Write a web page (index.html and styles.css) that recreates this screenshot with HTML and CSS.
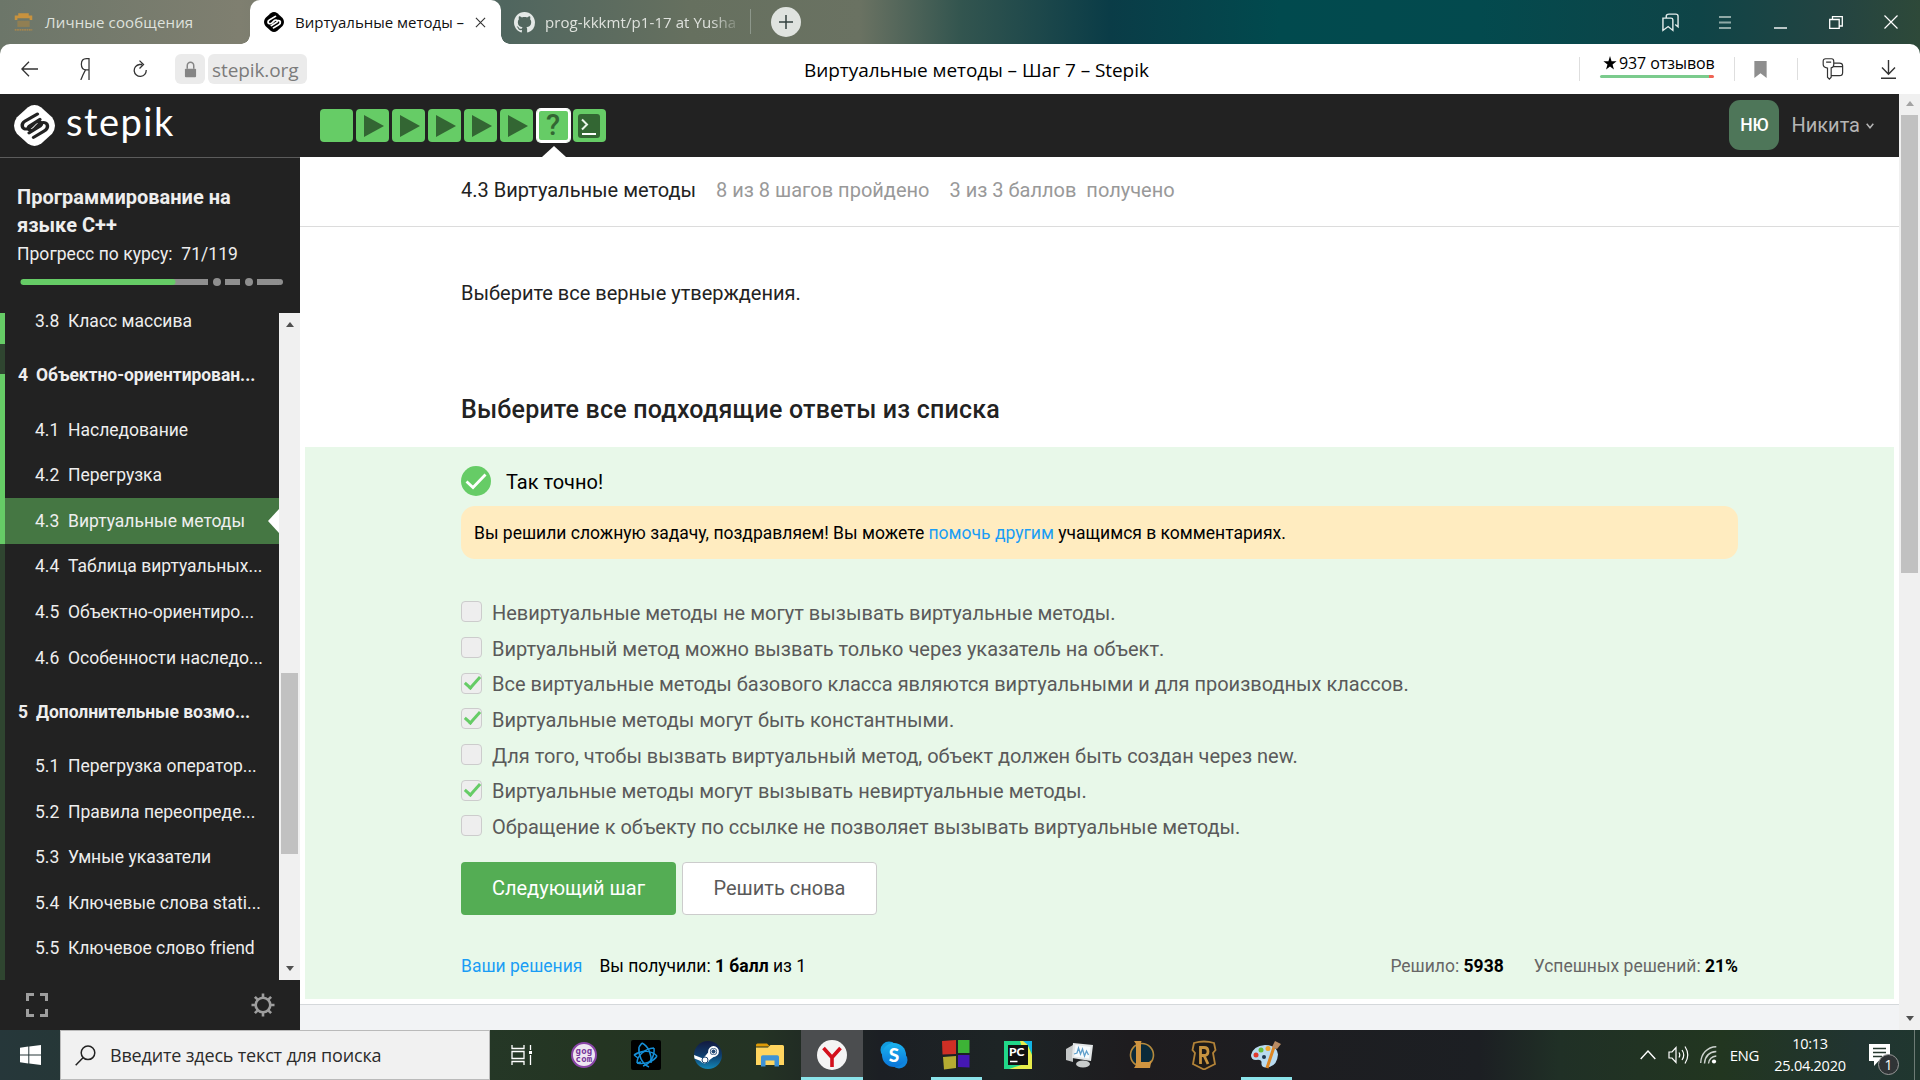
FILE: index.html
```html
<!DOCTYPE html>
<html lang="ru">
<head>
<meta charset="utf-8">
<title>Виртуальные методы – Шаг 7 – Stepik</title>
<link rel="stylesheet" href="styles.css">
</head>
<body>
<div class="screen">
  <header class="tabs">
    <div class="tab tab-first">
      <svg class="tab-icon" width="21" height="21" viewBox="0 0 22 24"><path d="M1 9V4h4V1.500h12V4h4v5h-3V7H4v2z" fill="#c8923e"/><path d="M4 10h14v7H4z" fill="#a98545" opacity=".6"/><path d="M1 20.500h20" stroke="#b98b45" stroke-width="1.500" stroke-dasharray="2 .7"/></svg>
      <span class="tab-title">Личные сообщения</span>
    </div>
    <div class="tab tab-active">
      <svg class="tab-icon" width="20" height="20" viewBox="0 0 42 50" preserveAspectRatio="none"><path d="M14 3q7-6 14 0l11 12q6 10 0 20L28 47q-7 6-14 0L3 35q-6-10 0-20z" fill="#000"/><path d="M24 11 11.500 19.500c-5 3.500-3.500 11.500 2.500 9.500 4-1.500 5-6 9-8.500 4-2 6.500 2 4 5L15.500 34M20 39.500l10.500-7.500c6-4 4.500-12-2-10.500" fill="none" stroke="#fff" stroke-width="4" stroke-linecap="round"/></svg>
      <span class="tab-title">Виртуальные методы –</span>
      <svg class="tab-close" width="11" height="11" viewBox="0 0 12 12"><path d="m1 1 10 10M11 1 1 11" stroke="#333" stroke-width="1.200"/></svg>
    </div>
    <div class="tab tab-last">
      <svg class="tab-icon" width="21" height="21" viewBox="0 0 16 16"><path fill="#e4e9e7" d="M8 0C3.580 0 0 3.580 0 8c0 3.540 2.290 6.530 5.470 7.590.4.070.55-.17.55-.38 0-.19-.01-.82-.01-1.490-2.010.37-2.530-.49-2.690-.94-.09-.23-.48-.94-.82-1.130-.28-.15-.68-.52-.01-.53.63-.01 1.080.58 1.230.82.72 1.210 1.870.87 2.330.66.07-.52.28-.87.51-1.070-1.780-.2-3.640-.89-3.640-3.950 0-.87.31-1.590.82-2.150-.08-.2-.36-1.020.08-2.120 0 0 .67-.21 2.200.82.640-.18 1.320-.27 2-.27s1.360.09 2 .27c1.530-1.040 2.200-.82 2.200-.82.44 1.100.16 1.920.08 2.120.51.56.82 1.270.82 2.150 0 3.070-1.870 3.750-3.650 3.950.29.25.54.73.54 1.480 0 1.070-.01 1.930-.01 2.200 0 .21.15.46.55.38A8.010 8.010 0 0 0 16 8c0-4.420-3.580-8-8-8z"/></svg>
      <span class="tab-title">prog-kkkmt/p1-17 at Yusha</span>
    </div>
    <div class="new-tab"><svg width="14" height="14" viewBox="0 0 15 15"><path d="M7.500 0v15M0 7.500h15" stroke="#33413f" stroke-width="1.600"/></svg></div>
    <div class="window-buttons">
      <span><svg width="17" height="19" viewBox="0 0 18 24" preserveAspectRatio="none"><path d="M1 6.500h8.500q2 0 2 2V22l-5-5-5.500 5zM4.500 6.500V4q0-2.500 3-2.500h7q2.500 0 2.500 2.500v13.500l-3-3" fill="none" stroke="#e3eceb" stroke-width="1.500"/></svg></span>
      <span><svg width="12" height="13" viewBox="0 0 12 13"><path d="M0 1h12M0 6.500h12M0 12h12" stroke="#8fa9a6" stroke-width="2"/></svg></span>
      <span><svg width="13" height="14" viewBox="0 0 13 14"><path d="M0 13h13" stroke="#fff" stroke-width="1.400"/></svg></span>
      <span><svg width="14" height="13" viewBox="0 0 14 13"><path d="M.7 3.500h9.500v9H.7zM3.500 3.500V.7h9.800V10h-3" fill="none" stroke="#fff" stroke-width="1.300"/></svg></span>
      <span><svg width="14" height="14" viewBox="0 0 14 14"><path d="m.5.500 13 13m0-13-13 13" stroke="#fff" stroke-width="1.200"/></svg></span>
    </div>
  </header>

  <nav class="toolbar">
    <svg class="tool-back" width="17" height="16" viewBox="0 0 17 16"><path d="M17 8H1M8 .7.900 8 8 15.300" fill="none" stroke="#333" stroke-width="1.300"/></svg>
    <svg class="tool-home" width="10" height="22" viewBox="0 0 10 23"><path d="M9.200 23V.700H6.500C3 .7 1.200 3 1.200 6.500S3 12.400 6.300 12.400H9M5.500 12.400 2.700 18Q1.500 21 .6 23" fill="none" stroke="#333" stroke-width="1.300"/></svg>
    <svg class="tool-reload" width="14" height="18" viewBox="0 0 14 18"><path d="M9 4.500H6.500A6 6 0 1 0 13.200 10M6.500.600l4 3.900-4 4" fill="none" stroke="#333" stroke-width="1.300"/></svg>
    <div class="lock-box"><svg width="13" height="17" viewBox="0 0 14 20" preserveAspectRatio="none"><path d="M3.500 9V5.500a3.500 4 0 0 1 7 0V9" fill="none" stroke="#858585" stroke-width="1.600"/><rect x="1" y="9" width="12" height="10" rx="1" fill="#858585"/></svg></div>
    <div class="url-box">stepik.org</div>
    <div class="page-title">Виртуальные методы – Шаг 7 – Stepik</div>
    <div class="reviews"><div class="reviews-label"><svg width="14" height="14" viewBox="0 0 15 16"><path d="M7.500 0 9.300 6H15l-4.600 3.700L12 15.500 7.500 12 3 15.500l1.600-5.800L0 6h5.700z"/></svg><span>937 отзывов</span></div><div class="reviews-bar"></div></div>
    <svg class="tool-mark" width="13" height="17" viewBox="0 0 13 18"><path d="M0 0h13v18l-6.500-5L0 18z" fill="#8e8e8e"/></svg>
    <svg class="tool-key" width="22" height="22" viewBox="0 0 23 24"><path d="M3.500.8H10q2.300 0 2.300 2.700v3.800q0 2.700-2.800 3.500V21l-2 2-2-2V11Q.8 10 .8 7V3.500Q.8.800 3.500.800zM4 4.500h5.500M12.500 5.500h6q3.500 0 3.500 3v7.500q0 3.200-3.500 3.200h-9M11.500 9.500H22" fill="none" stroke="#333" stroke-width="1.300"/></svg>
    <svg class="tool-down" width="15" height="19" viewBox="0 0 15 19"><path d="M7.500 0v14M1 7.500l6.500 6.700L14 7.500M0 18.200h15" fill="none" stroke="#333" stroke-width="1.400"/></svg>
  </nav>

  <div class="page">
    <div class="site">
      <header class="site-head">
        <div class="brand">
          <svg width="41" height="41" viewBox="0 0 42 50" preserveAspectRatio="none"><path d="M14 3q7-6 14 0l11 12q6 10 0 20L28 47q-7 6-14 0L3 35q-6-10 0-20z" fill="#fff"/><path d="M24 11 11.500 19.500c-5 3.500-3.500 11.500 2.500 9.500 4-1.500 5-6 9-8.500 4-2 6.500 2 4 5L15.500 34M20 39.500l10.500-7.500c6-4 4.500-12-2-10.500-4 1.500-5.500 6.500-9 9-3.500 2-6-1.500-4-4.500l11-8.500" fill="none" stroke="#222" stroke-width="3.600" stroke-linecap="round"/></svg>
          <span>stepik</span>
        </div>
        <div class="steps">
          <i class="step"></i>
          <i class="step play"></i>
          <i class="step play"></i>
          <i class="step play"></i>
          <i class="step play"></i>
          <i class="step play"></i>
          <i class="step current">?</i>
          <i class="step"><svg width="22" height="24" viewBox="0 0 22 24"><rect width="22" height="24" rx="3" fill="#336633"/><path d="m4 5.500 5 5-5 5" fill="none" stroke="#e8f5e8" stroke-width="2"/><path d="M4 20h14" stroke="#fff" stroke-width="2"/></svg></i>
        </div>
        <div class="user"><span class="avatar">НЮ</span><span class="user-name">Никита</span><svg width="8" height="6" viewBox="0 0 8 6"><path d="m.7.700 3.300 4 3.300-4" fill="none" stroke="#b5b5b5" stroke-width="1.500"/></svg></div>
      </header>
      <div class="columns">
        <aside class="sidebar">
          <div class="course">
            <div class="course-name">Программирование на языке C++</div>
            <div class="course-progress">Прогресс по курсу:&nbsp; 71/119</div>
            <svg width="264" height="10" viewBox="0 0 264 10"><path d="M4 5h184M205 5h15M237 5h22" stroke="#8f8f8f" stroke-width="6"/><circle cx="197" cy="5" r="4" fill="#8f8f8f"/><circle cx="229" cy="5" r="4" fill="#8f8f8f"/><circle cx="260" cy="5" r="3" fill="#8f8f8f"/><path d="M3.500 5h149" stroke="#66cc66" stroke-width="6" stroke-linecap="round"/></svg>
          </div>
          <div class="contents">
            <div class="stripe"><i class="strip-a"></i><i class="strip-b"></i><i class="strip-c"></i></div>
            <div class="lessons">
              <div class="lesson lesson-top"><b>3.8</b>Класс массива</div>
              <div class="section"><b>4</b>Объектно-ориентирован...</div>
              <div class="lesson"><b>4.1</b>Наследование</div>
              <div class="lesson"><b>4.2</b>Перегрузка</div>
              <div class="lesson lesson-current"><b>4.3</b>Виртуальные методы</div>
              <div class="lesson"><b>4.4</b>Таблица виртуальных...</div>
              <div class="lesson"><b>4.5</b>Объектно-ориентиро...</div>
              <div class="lesson"><b>4.6</b>Особенности наследо...</div>
              <div class="section"><b>5</b>Дополнительные возмо...</div>
              <div class="lesson"><b>5.1</b>Перегрузка оператор...</div>
              <div class="lesson"><b>5.2</b>Правила переопреде...</div>
              <div class="lesson"><b>5.3</b>Умные указатели</div>
              <div class="lesson"><b>5.4</b>Ключевые слова stati...</div>
              <div class="lesson"><b>5.5</b>Ключевое слово friend</div>
            </div>
            <div class="side-scroll"><i class="arrow-up"></i><i class="side-thumb"></i><i class="arrow-down"></i></div>
          </div>
          <div class="side-foot">
            <svg width="22" height="24" viewBox="0 0 22 24"><path d="M1.500 8V1.500H8M14 1.500h6.500V8M20.500 16v6.500H14M8 22.500H1.500V16" fill="none" stroke="#9e9e9e" stroke-width="3"/></svg>
            <svg width="24" height="24" viewBox="0 0 24 24"><circle cx="12" cy="12" r="7.300" fill="none" stroke="#9e9e9e" stroke-width="2.600"/><g stroke="#9e9e9e" stroke-width="2.600"><path d="M12 .5v4M12 19.500v4M.5 12h4M19.500 12h4M3.900 3.900l2.800 2.800M17.300 17.300l2.800 2.800M3.900 20.100l2.800-2.800M17.300 6.700l2.800-2.800"/></g></svg>
          </div>
        </aside>
        <main class="main">
          <div class="lesson-head"><span class="lesson-title">4.3 Виртуальные методы</span><span class="steps-done">8 из 8 шагов пройдено</span><span class="points">3 из 3 баллов &nbsp;получено</span></div>
          <p class="question">Выберите все верные утверждения.</p>
          <h2 class="task">Выберите все подходящие ответы из списка</h2>
          <section class="answer">
            <div class="verdict"><svg width="30" height="30" viewBox="0 0 30 30"><circle cx="15" cy="15" r="15" fill="#66cc66"/><path d="m5.500 15.500 6.500 6L24.500 8.500" fill="none" stroke="#fff" stroke-width="2.800"/></svg><span>Так точно!</span></div>
            <div class="praise"><span>Вы решили сложную задачу, поздравляем! Вы можете <a>помочь другим</a> учащимся в комментариях.</span></div>
            <ul class="choices">
              <li><i class="box"></i><span>Невиртуальные методы не могут вызывать виртуальные методы.</span></li>
              <li><i class="box"></i><span>Виртуальный метод можно вызвать только через указатель на объект.</span></li>
              <li><i class="box checked"></i><span>Все виртуальные методы базового класса являются виртуальными и для производных классов.</span></li>
              <li><i class="box checked"></i><span>Виртуальные методы могут быть константными.</span></li>
              <li><i class="box"></i><span>Для того, чтобы вызвать виртуальный метод, объект должен быть создан через new.</span></li>
              <li><i class="box checked"></i><span>Виртуальные методы могут вызывать невиртуальные методы.</span></li>
              <li><i class="box"></i><span>Обращение к объекту по ссылке не позволяет вызывать виртуальные методы.</span></li>
            </ul>
            <div class="buttons"><button class="btn next">Следующий шаг</button><button class="btn again">Решить снова</button></div>
            <div class="stats"><a>Ваши решения</a><span class="got">Вы получили: <b>1 балл</b> из 1</span><span class="solved">Решило: <b>5938</b></span><span class="rate">Успешных решений: <b>21%</b></span></div>
          </section>
          <div class="below"></div>
        </main>
      </div>
    </div>
    <div class="page-scroll"><i class="arrow-up dim"></i><i class="page-thumb"></i><i class="arrow-down"></i></div>
  </div>

  <footer class="taskbar">
    <div class="start"><svg width="21" height="20" viewBox="0 0 21 20"><path d="M0 2.800 8.300 1.600v7.900H0zM9.300 1.500 21 0v9.500H9.300zM0 10.500h8.300v7.900L0 17.200zM9.300 10.500H21V20L9.300 18.400z" fill="#fff"/></svg></div>
    <div class="search"><svg width="21" height="21" viewBox="0 0 21 21"><circle cx="13" cy="7.800" r="6.800" fill="none" stroke="#222" stroke-width="1.500"/><path d="M8 12.800.700 20.200" stroke="#222" stroke-width="1.500"/></svg><span>Введите здесь текст для поиска</span></div>
    <div class="apps">
      <div class="app"><svg width="22" height="20" viewBox="0 0 22 20"><path d="M1 0v3.500h12V0M1 20v-3.500h12V20M1 6.500h12v7H1zM19.500 0v5M19.500 10v10" fill="none" stroke="#fff" stroke-width="1.300"/><path d="M18 6h3v3h-3z" fill="#fff"/></svg></div>
      <div class="app"><div class="gog">gog<br>com</div></div>
      <div class="app"><svg width="30" height="30" viewBox="0 0 30 30"><rect width="30" height="30" rx="2" fill="#000"/><g fill="none" stroke="#158fd8" stroke-width="1.500"><path d="M11 3c6 3 10 11 9 20M8 7c-1 8 3 17 10 20M11 3 8 7"/><path d="M3 15c8-5 17-5 23 1M6 23c8 2 17-2 20-7M3 15l4 3"/><path d="M6 23c0-7 7-14 17-15M12 26c7-2 12-10 11-18M6 23l4-1"/></g></svg></div>
      <div class="app"><svg width="28" height="28" viewBox="0 0 28 28"><defs><linearGradient id="steam" x2="0" y2="1"><stop stop-color="#131a40"/><stop offset=".5" stop-color="#0f3c6b"/><stop offset="1" stop-color="#1387b8"/></linearGradient></defs><circle cx="14" cy="14" r="14" fill="url(#steam)"/><path d="m0 14 9 3.500 6-7 8 3-7.500 5.500a5 5 0 0 1-9 1L.5 17.500z" fill="#fff"/><circle cx="19.500" cy="10.500" r="4.500" fill="#244a76" stroke="#fff" stroke-width="1.800"/><circle cx="19.500" cy="10.500" r="2.500" fill="none" stroke="#fff"/><circle cx="11" cy="19" r="3" fill="none" stroke="#244a76"/></svg></div>
      <div class="app"><svg width="28" height="24" viewBox="0 0 28 24"><path d="M0 2q0-1.500 1.500-1.500h9.500l3 3H0z" fill="#dd9a06"/><path d="M0 4.500h12l2.500-2.500H26.500q1.500 0 1.500 1.500V22H0z" fill="#ffd55f"/><path d="M5 23.500V14q0-1.800 1.800-1.800h14.400q1.800 0 1.800 1.800v9.500h-4.500V17.500h-9v6z" fill="#3f93d6"/></svg></div>
      <div class="app focused"><svg width="30" height="30" viewBox="0 0 30 30"><circle cx="15" cy="15" r="15" fill="#f4f4f4"/><path d="m6.500 8 8.500 9.500V27M23.500 8 15 17.500" fill="none" stroke="#d3101c" stroke-width="3.600"/></svg></div>
      <div class="app"><svg width="28" height="28" viewBox="0 0 28 28"><defs><linearGradient id="skype" x2="0" y2="1"><stop stop-color="#1bb4f0"/><stop offset="1" stop-color="#0a74d8"/></linearGradient></defs><circle cx="9" cy="9" r="8.500" fill="#129bdf"/><circle cx="19" cy="19" r="8.500" fill="#1085dc"/><circle cx="14" cy="14" r="12" fill="url(#skype)"/><text x="14" y="21" text-anchor="middle" font-family="Lato,sans-serif" font-weight="900" font-size="19" fill="#fff">S</text></svg></div>
      <div class="app running"><svg width="28" height="30" viewBox="0 0 28 30"><path d="m0 1 14-1v14L.5 14.500z" fill="#cf2f25"/><path d="M16 0h11.500v13H16z" fill="#3db336"/><path d="m1 17 13-1v12L2 29.500z" fill="#b5ac32"/><path d="M16 15h11.500v12.500L16 27z" fill="#4518b4"/></svg></div>
      <div class="app"><svg width="28" height="28" viewBox="0 0 28 28"><path d="M0 0h28v28H0z" fill="#21d789"/><path d="M16 0h6l6 14v14H5l18-6z" fill="#e7ec4b"/><path d="M19 0h9v12L24 4z" fill="#12b4e6"/><path d="M4 4h20v20H4z" fill="#111"/><path d="M6 20.500h7.500" stroke="#fff" stroke-width="1.500"/><text x="5" y="15" font-family="Lato,sans-serif" font-weight="900" font-size="12" fill="#fff">PC</text></svg></div>
      <div class="app"><svg width="28" height="26" viewBox="0 0 28 26"><path d="m0 7 7-4v17l-7-2z" fill="#c4c7c7"/><path d="m7 1 20 2-2 16L6 16z" fill="#e3e6e7"/><path d="m9.500 3 15 2-1.500 11.500L8 14.500z" fill="#f7fbfd"/><path d="m8 12 3-1 1.500-5 2 6 2-5 2 7 2-5 2 4" fill="none" stroke="#5f9fcb" stroke-width="1.300"/><ellipse cx="17" cy="22" rx="7" ry="3.500" fill="#c9cccc"/></svg></div>
      <div class="app"><svg width="26" height="30" viewBox="0 0 26 30"><circle cx="13" cy="15" r="11.500" fill="#0a2a3a" stroke="#b58a3d" stroke-width="1.600"/><path d="M5 1h7.500l-.5 2v19h8l2.500-2-1.500 8H5l2-3V4z" fill="#cf9440"/></svg></div>
      <div class="app"><svg width="26" height="30" viewBox="0 0 26 30"><path d="M3 3q10-3 20 0l1.500 7-2.500 3 2 11q-5 2.500-11 5.500Q7 26.500 2 24l2-11-2.500-3z" fill="#1d1a18" stroke="#b38338" stroke-width="1.800"/><path d="M9.500 24V7.500h3.500q4 0 4 4t-4 4h-2.500M13 15.500l4 8.500" fill="none" stroke="#c7933f" stroke-width="2.800"/></svg></div>
      <div class="app running"><svg width="30" height="28" viewBox="0 0 30 28"><path d="M14 4q12 0 13 9.500-1 12.500-12 13-5-.5-4.500-4.500T5 19Q0 19 0 14 2 5 14 4z" fill="#b9dbf0"/><circle cx="5" cy="14" r="2.500" fill="#e0392d"/><circle cx="10" cy="9" r="2.500" fill="#67bf3a"/><circle cx="17" cy="7.500" r="2.500" fill="#f0a52c"/><circle cx="13" cy="16" r="2" fill="#1d3750"/><path d="M16 27 23 6" stroke="#dd8623" stroke-width="3"/><path d="m21 6 3-6 6 3-4 5z" fill="#b88b63"/></svg></div>
    </div>
    <div class="tray">
      <svg class="tray-more" width="16" height="10" viewBox="0 0 16 10"><path d="m.7 9 7.300-8 7.300 8" fill="none" stroke="#fff" stroke-width="1.400"/></svg>
      <svg class="tray-sound" width="21" height="20" viewBox="0 0 21 20"><path d="M1 7h3l4-4.500v15L4 13H1zM11 7.500q1.500 2.500 0 5M14 5q3.500 5 0 10M17 1.500q5.500 8.500 0 17" fill="none" stroke="#fff" stroke-width="1.200"/></svg>
      <svg class="tray-net" width="17" height="18" viewBox="0 0 17 18"><path d="M.7 17C1 8 7 1 16.300.800M4.500 17.500C5 10.500 9 6 16.300 5.500M8.500 17.500c.5-4 3-7 7.800-7.500" fill="none" stroke="#ccd2cd" stroke-width="1.400"/><circle cx="14" cy="15.500" r="2.100" fill="#fff"/></svg>
      <span class="lang">ENG</span>
      <div class="clock"><span>10:13</span><span>25.04.2020</span></div>
      <div class="notice"><svg width="21" height="22" viewBox="0 0 21 22"><path d="M0 0h21v17H9.500L5 22v-5H0z" fill="#fff"/><path d="M4 4.500h13M4 8.500h13M4 12.500h9" stroke="#26382f" stroke-width="1.300"/></svg><span class="badge">1</span></div>
      <i class="desk"></i>
    </div>
  </footer>
</div>
</body>
</html>
```
FILE: styles.css
```css
* { box-sizing: border-box; }
body { margin: 0; overflow: hidden; font-family: Roboto, sans-serif; }
a { color: #1a9df5; }
svg { display: block; flex: none; }
.screen { width: 1920px; height: 1080px; display: flex; flex-direction: column; background: linear-gradient(90deg, #6c7669 0, #7f7f70 240px, #50665f 505px, #66705f 690px, #6a7262 860px, #33554f 960px, #0a3c47 1110px, #014a4e 1280px, #034a4e 1480px, #0f4447 1700px, #244441 1840px, #2e4939 1920px); }

/* Browser tab strip */
.tabs { height: 44px; flex: none; display: flex; align-items: center; font-family: "Open Sans", sans-serif; font-size: 15px; color: #dfe2dd; }
.tab { height: 44px; display: flex; align-items: center; position: relative; white-space: nowrap; overflow: hidden; }
.tab-first { width: 250px; padding-left: 13px; gap: 11px; }
.tab-first .tab-title { letter-spacing: .15px; }
.tab-active { width: 251px; padding-left: 14px; background: #fff; color: #111; border-radius: 10px 10px 0 0; overflow: visible; }
.tab-active::before, .tab-active::after { content: ""; position: absolute; bottom: 0; width: 9px; height: 9px; }
.tab-active::before { left: -9px; background: radial-gradient(circle at 0 0, transparent 8.5px, #fff 9px); }
.tab-active::after { right: -9px; background: radial-gradient(circle at 100% 0, transparent 8.5px, #fff 9px); }
.tab-active .tab-title { width: 172px; margin-left: 11px; letter-spacing: 0; }
.tab-close { margin-left: 8px; }
.tab-last { width: 250px; padding-left: 13px; gap: 10px; }
.tab-last::after { content: ""; position: absolute; right: 0; top: 9px; height: 25px; width: 1px; background: #8d978b; }
.tab-last .tab-title { width: 196px; letter-spacing: .08px; -webkit-mask-image: linear-gradient(90deg, #000 165px, transparent 198px); }
.new-tab { width: 30px; height: 30px; margin-left: 20px; margin-bottom: 1px; border-radius: 50%; background: #dfe3df; display: grid; place-items: center; }
.window-buttons { margin-left: auto; padding-right: 1px; display: flex; }
.window-buttons span { width: 55.300px; height: 44px; display: grid; place-items: center; }

/* Address bar */
.toolbar { height: 50px; flex: none; background: #fff; border-radius: 10px 10px 0 0; display: flex; align-items: center; font-family: "Open Sans", sans-serif; }
.tool-back { margin-left: 21px; }
.tool-home { margin-left: 42px; }
.tool-reload { margin-left: 43px; }
.lock-box { width: 30px; height: 30px; margin-left: 28px; border-radius: 6px; background: #ebebeb; display: grid; place-items: center; }
.url-box { width: 99px; height: 30px; margin-left: 3px; padding-left: 4px; border-radius: 6px; background: #ebebeb; color: #7b7b7b; font-size: 19px; line-height: 32px; letter-spacing: -.1px; white-space: nowrap; }
.page-title { width: 775px; margin-left: 497px; font-size: 19px; letter-spacing: -.06px; line-height: 32px; white-space: nowrap; padding-top: 1px; }
.reviews { width: 156px; height: 24px; padding: 0 20px; border: solid #dedede; border-width: 0 1px; }
.reviews-label { display: flex; align-items: center; gap: 2px; height: 20px; margin-top: -4px; padding-left: 3px; font-size: 16px; white-space: nowrap; }
.reviews-label span { letter-spacing: -.1px; }
.reviews-bar { height: 3px; margin-top: 2px; border-radius: 2px; background: linear-gradient(90deg, #7bcb8d 96%, #ef6354 96%); }
.tool-mark { margin-left: 19px; }
.tool-key { box-sizing: content-box; margin-left: 30px; padding-left: 24px; border-left: 1px solid #dedede; }
.tool-down { margin-left: 37px; }

/* Site */
.page { height: 936px; flex: none; display: flex; }
.site { width: 1899px; display: flex; flex-direction: column; background: #fff; }
.site-head { height: 63px; flex: none; display: flex; align-items: center; background: #222; }
.brand { width: 320px; padding-left: 14px; display: flex; align-items: center; gap: 11px; color: #fff; font: 38px/50px Lato, sans-serif; letter-spacing: 1.5px; }
.brand span { margin-top: -10px; }
.steps { display: flex; gap: 3.1px; }
.step { width: 33px; height: 33px; border-radius: 4px; background: #66cc66; display: grid; place-items: center; position: relative; font-style: normal; }
.play::after { content: ""; margin-left: 2px; border: solid transparent; border-width: 11.500px 0 11.500px 20px; border-left-color: #336633; }
.current { box-shadow: inset 0 0 0 2px #fff, 0 0 0 1px #fff; color: #336633; font: 500 29px/33px Roboto, sans-serif; }
.current::after { content: ""; position: absolute; left: 5px; top: 37px; border: solid transparent; border-width: 0 12px 11px; border-bottom-color: #fff; }
.user { margin-left: auto; padding-right: 25px; display: flex; align-items: center; color: #b5b5b5; font-size: 20px; }
.avatar { width: 50px; height: 50px; border-radius: 11px; background: #4e7659; color: #fff; font-size: 17.500px; font-weight: 500; display: grid; place-items: center; margin: -2px 12px 0 0; }
.user-name { margin: -1px 6px 0 0; }
.columns { height: 873px; display: flex; }

/* Course contents */
.sidebar { width: 300px; display: flex; flex-direction: column; background: #222; color: #eee; border-top: 1px solid #5c5c5c; }
.course { height: 155px; padding: 25px 17px 0; font-size: 17.500px; }
.course-name { font-size: 20px; line-height: 28px; font-weight: 700; }
.course-progress { margin-top: 1px; line-height: 28px; white-space: nowrap; letter-spacing: .03px; }
.course svg { margin: 9px 0 0 3px; }
.contents { height: 667px; display: flex; overflow: hidden; }
.stripe { width: 5px; display: flex; flex-direction: column; background: #2f4530; }
.strip-a { height: 31px; background: #66cc66; }
.strip-b { height: 30px; }
.strip-c { height: 170px; background: #66cc66; }
.lessons { width: 274px; display: flex; flex-direction: column; font-size: 17.500px; white-space: nowrap; }
.lessons b { font-weight: inherit; }
.lesson { height: 45.600px; flex: none; padding-left: 30px; display: flex; align-items: center; position: relative; }
.lesson b { width: 33px; }
.lesson-top { height: 31px; padding-bottom: 15px; line-height: 16px; }
.section { height: 62.800px; flex: none; padding-left: 13px; display: flex; align-items: center; font-weight: 700; letter-spacing: -.05px; }
.section b { width: 18px; }
.lesson-current { background: #457743; }
.lesson-current::after { content: ""; position: absolute; right: 0; border: solid transparent; border-width: 12px 11px 12px 0; border-right-color: #fff; }
.side-scroll { width: 21px; display: flex; flex-direction: column; align-items: center; background: #f0f0f0; }
.arrow-up { border: solid transparent; border-width: 0 4.500px 5px; border-bottom-color: #505050; margin-top: 9px; }
.arrow-down { border: solid transparent; border-width: 5px 4.500px 0; border-top-color: #505050; margin: auto 0 9px; }
.side-thumb { width: 17px; height: 181px; margin-top: 346px; background: #c1c1c1; }
.side-foot { height: 50px; display: flex; align-items: center; justify-content: space-between; padding: 0 25px 1px 26px; }

/* Lesson */
.main { width: 1599px; display: flex; flex-direction: column; font-size: 20px; color: #222; }
.lesson-head { height: 70px; padding: 0 0 4px 161px; border-bottom: 1px solid #dcdcdc; display: flex; align-items: center; white-space: nowrap; }
.steps-done, .points { color: #999; margin-left: 20px; }
.question { margin: 51px 0 0 161px; line-height: 30px; }
.task { margin: 86px 0 0 161px; height: 53px; font-size: 25px; line-height: 32px; font-weight: 500; letter-spacing: .2px; }
.answer { height: 552px; margin: 0 5px; padding: 19px 156px 0; background: #e8f8e9; color: #000; }
.verdict { display: flex; align-items: center; gap: 15px; height: 30px; }
.verdict span { padding-top: 2px; }
.praise { height: 53px; margin-top: 10px; padding-left: 13px; border-radius: 14px; background: #ffecc0; font-size: 17.500px; line-height: 54px; }
.choices { list-style: none; margin: 35px 0 0; padding: 0; color: #5a5a5a; }
.choices li { height: 35.700px; display: flex; align-items: center; }
.choices span { white-space: nowrap; padding-top: 2px; }
.box { width: 21px; height: 21px; margin-right: 10px; border: 1px solid #ccc; border-radius: 4px; background: #eee; position: relative; }
.checked::after { content: ""; position: absolute; left: 6px; top: -1px; width: 6px; height: 13px; border: solid #66cc66; border-width: 0 3px 3px 0; transform: rotate(42deg); }
.buttons { display: flex; gap: 6px; margin-top: 18px; }
.btn { height: 53px; border: 0; border-radius: 4px; font: 20px Roboto, sans-serif; padding: 0; }
.next { width: 215px; background: #54ad54; color: #fff; }
.again { width: 195px; background: #fff; color: #5a5a5a; border: 1px solid #ccc; }
.stats { display: flex; margin-top: 39px; font-size: 17.500px; line-height: 24px; white-space: nowrap; }
.got { margin-left: 17px; }
.solved { margin-left: auto; color: #666; }
.rate { margin-left: 30px; color: #666; }
.solved b, .rate b { color: #000; font-weight: 700; }
.below { height: 26px; margin-top: 5px; border-top: 1px solid #d5d8db; background: #f2f3f5; }
.page-scroll { width: 21px; display: flex; flex-direction: column; align-items: center; background: #f0f0f0; }
.page-thumb { width: 17px; height: 458px; margin-top: 9px; background: #c1c1c1; }
.page-scroll .dim { border-bottom-color: #a3a3a3; margin-top: 7px; }

/* Desktop taskbar */
.taskbar { height: 50px; flex: none; display: flex; color: #fff; font-family: "Open Sans", sans-serif; background: linear-gradient(90deg, #26373a 0, #253828 440px, #243522 600px, #243324 760px, #1c1f24 880px, #1d2425 1000px, #1e1c1f 1130px, #1c1f23 1480px, #203026 1560px, #223620 1720px, #213431 1860px, #20372f 1920px); }
.start { width: 60px; display: grid; place-items: center; }
.search { width: 430px; padding-left: 14px; display: flex; align-items: center; gap: 14px; border: 1px solid #bababa; background: #f1f1f1; color: #2b2b2b; font-size: 18px; white-space: nowrap; }
.search span { letter-spacing: -.17px; }
.apps { display: flex; margin-left: 1px; }
.app { width: 62px; height: 50px; display: grid; place-items: center; position: relative; }
.focused { background: #4b4d4f; box-shadow: inset 0 -3px #8be3ea; }
.running { background: linear-gradient(#8be3ea, #8be3ea) 50% 100% / 51px 3px no-repeat; }
.gog { width: 26px; height: 26px; border: 2px solid #8a45a8; border-radius: 50%; background: #eee6f2; color: #76359a; font: 700 9px/8px "DejaVu Sans Mono", monospace; text-align: center; padding-top: 3px; letter-spacing: .3px; }
.tray { margin-left: auto; display: flex; align-items: center; }
.tray-more { margin-right: 12px; }
.tray-sound { margin-right: 11px; }
.tray-net { margin-right: 11px; }
.lang { margin-left: 2px; font-size: 15px; letter-spacing: -.4px; }
.clock { width: 74px; margin-left: 14px; display: flex; flex-direction: column; align-items: center; font-size: 14.500px; line-height: 22px; letter-spacing: -.25px; }
.notice { position: relative; margin-left: 22px; }
.badge { position: absolute; left: 9px; top: 10px; width: 21px; height: 21px; border: 1px solid #999; border-radius: 50%; background: #303436; font-size: 14px; line-height: 19px; text-align: center; }
.desk { width: 1px; height: 50px; margin-left: 24px; margin-right: 5px; background: #6d7b75; }
```
